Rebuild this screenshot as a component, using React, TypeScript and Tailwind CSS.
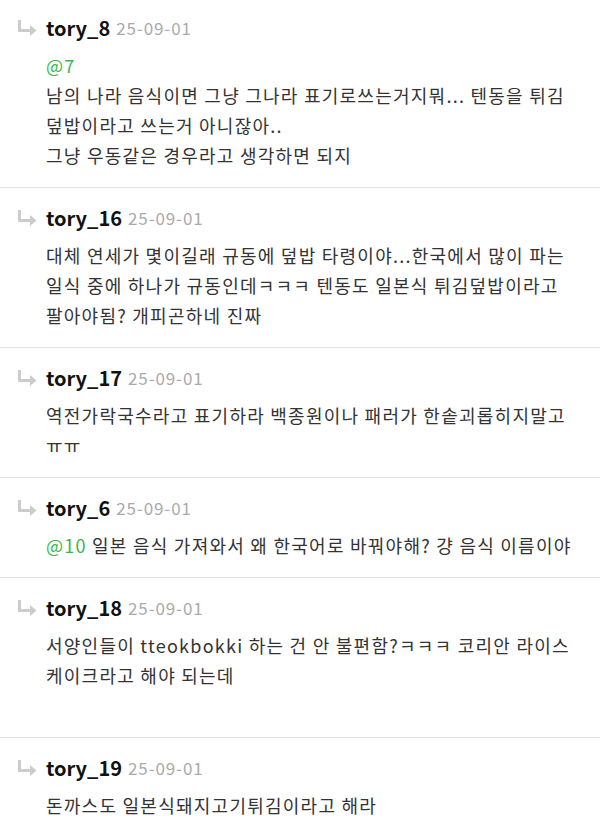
import React from "react";

type Comment = {
  user: string;
  date: string;
  lines: React.ReactNode[];
};

const Mention = ({ children }: { children: React.ReactNode }) => (
  <span className="text-[#3db54a]">{children}</span>
);

const comments: Comment[] = [
  {
    user: "tory_8",
    date: "25-09-01",
    lines: [
      <Mention>@7</Mention>,
      "남의 나라 음식이면 그냥 그나라 표기로쓰는거지뭐... 텐동을 튀김",
      "덮밥이라고 쓰는거 아니잖아..",
      "그냥 우동같은 경우라고 생각하면 되지",
    ],
  },
  {
    user: "tory_16",
    date: "25-09-01",
    lines: [
      "대체 연세가 몇이길래 규동에 덮밥 타령이야...한국에서 많이 파는",
      "일식 중에 하나가 규동인데ㅋㅋㅋ 텐동도 일본식 튀김덮밥이라고",
      "팔아야됨? 개피곤하네 진짜",
    ],
  },
  {
    user: "tory_17",
    date: "25-09-01",
    lines: ["역전가락국수라고 표기하라 백종원이나 패러가 한솥괴롭히지말고", "ㅠㅠ"],
  },
  {
    user: "tory_6",
    date: "25-09-01",
    lines: [
      <>
        <Mention>@10</Mention> 일본 음식 가져와서 왜 한국어로 바꿔야해? 걍 음식 이름이야
      </>,
    ],
  },
  {
    user: "tory_18",
    date: "25-09-01",
    lines: [
      "서양인들이 tteokbokki 하는 건 안 불편함?ㅋㅋㅋ 코리안 라이스",
      "케이크라고 해야 되는데",
      "\u00a0",
    ],
  },
  {
    user: "tory_19",
    date: "25-09-01",
    lines: ["돈까스도 일본식돼지고기튀김이라고 해라"],
  },
];

const ReplyIcon = () => (
  <svg width="20" height="16" viewBox="0 0 20 16" className="shrink-0">
    <path d="M2.5 0 V10.5 H14" fill="none" stroke="#cccccc" strokeWidth="3" />
    <polygon points="13,5 19.5,10.5 13,16" fill="#cccccc" />
  </svg>
);

export default function App() {
  return (
    <div
      className="w-[600px] h-[832px] overflow-hidden bg-white"
      style={{ fontFamily: '"Noto Sans CJK KR", "Noto Sans", sans-serif' }}
    >
      {comments.map((c, i) => (
        <div
          key={i}
          className={
            i === 0
              ? "pt-[14px] pb-[17px] pr-2"
              : "border-t border-[#e2e2e2] pt-[16px] pb-[17px] pr-2"
          }
        >
          <div className="flex items-center h-[28px] pl-[17px]">
            <ReplyIcon />
            <span className="ml-[9px] text-[20px] font-bold text-[#111111] leading-[28px]">
              {c.user}
            </span>
            <span className="ml-[6px] text-[17px] tracking-[0.9px] text-[#aaaaaa] leading-[28px]">
              {c.date}
            </span>
          </div>
          <div className="mt-[8px] pl-[46px] text-[18px] tracking-[1.25px] leading-[30px] text-[#333333]">
            {c.lines.map((l, j) => (
              <div key={j} className="whitespace-nowrap">
                {l}
              </div>
            ))}
          </div>
        </div>
      ))}
    </div>
  );
}
